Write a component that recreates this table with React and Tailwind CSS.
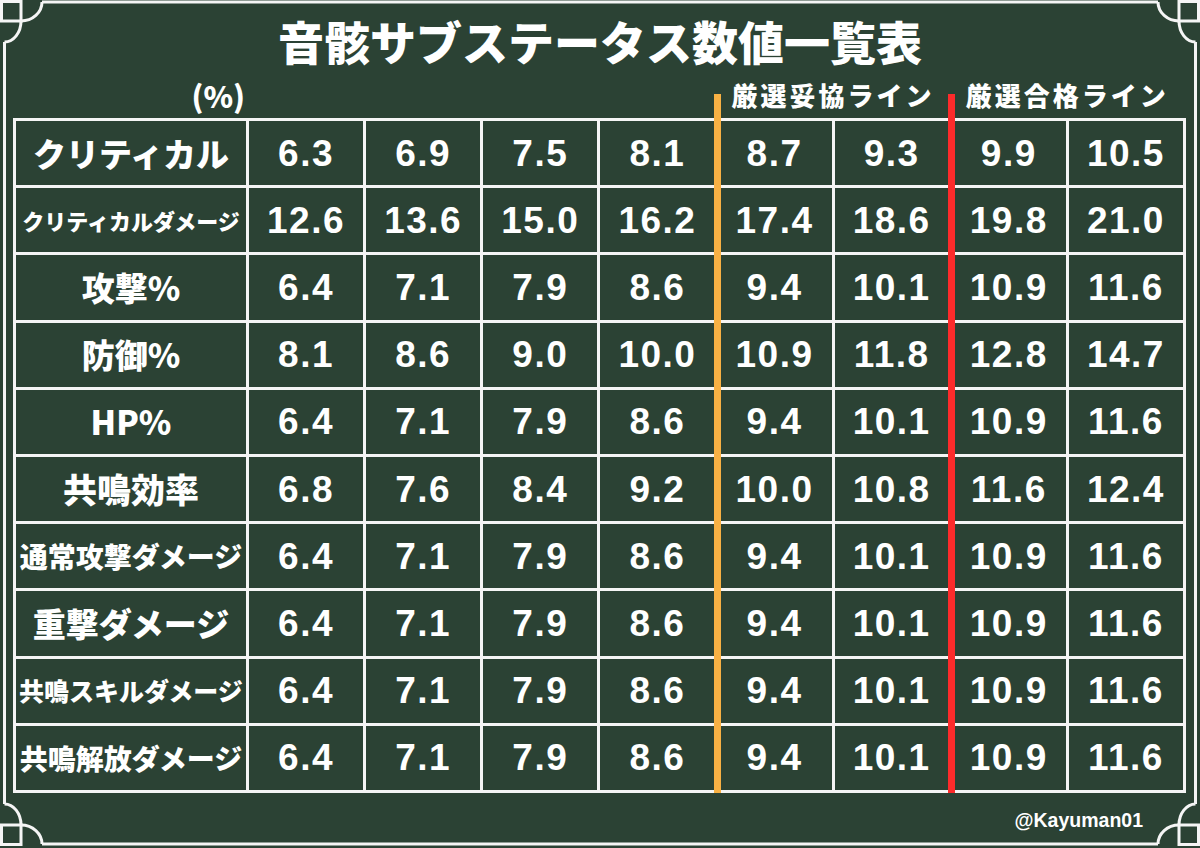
const NUM_STD = ["6.4", "7.1", "7.9", "8.6", "9.4", "10.1", "10.9", "11.6"];

const ROWS = [
  { label: "クリティカル", size: "text-[33px]", values: ["6.3", "6.9", "7.5", "8.1", "8.7", "9.3", "9.9", "10.5"] },
  { label: "クリティカルダメージ", size: "text-[22px]", values: ["12.6", "13.6", "15.0", "16.2", "17.4", "18.6", "19.8", "21.0"] },
  { label: "攻撃%", size: "text-[33px]", values: NUM_STD },
  { label: "防御%", size: "text-[33px]", values: ["8.1", "8.6", "9.0", "10.0", "10.9", "11.8", "12.8", "14.7"] },
  { label: "HP%", size: "text-[33px]", values: NUM_STD },
  { label: "共鳴効率", size: "text-[34px]", values: ["6.8", "7.6", "8.4", "9.2", "10.0", "10.8", "11.6", "12.4"] },
  { label: "通常攻撃ダメージ", size: "text-[28px]", values: NUM_STD },
  { label: "重撃ダメージ", size: "text-[33px]", values: NUM_STD },
  { label: "共鳴スキルダメージ", size: "text-[25px]", values: NUM_STD },
  { label: "共鳴解放ダメージ", size: "text-[28px]", values: NUM_STD },
];

const JP = "font-['Noto_Sans_CJK_JP',sans-serif]";
const NUM = "font-['Liberation_Sans',Arial,sans-serif]";

function Corner({ transform }) {
  return (
    <g transform={transform}>
      <path d="M1.5,1.5 H21 V21 H1.5 Z" />
      <path d="M42,2 A21 19 0 0 1 21,21" />
      <path d="M21,21 A16.5 21 0 0 1 4.5,42" />
    </g>
  );
}

function Frame() {
  return (
    <svg
      className="absolute inset-0 pointer-events-none"
      width="1200"
      height="848"
      viewBox="0 0 1200 848"
      fill="none"
      stroke="#f5f5f5"
      strokeWidth="3"
    >
      <path d="M42,2 H1158" />
      <path d="M42,844 H1158" />
      <path d="M4.5,42 V804" />
      <path d="M1195.5,42 V804" />
      <Corner transform="" />
      <Corner transform="matrix(-1 0 0 1 1200 0)" />
      <Corner transform="matrix(1 0 0 -1 0 846)" />
      <Corner transform="matrix(-1 0 0 -1 1200 846)" />
    </svg>
  );
}

export default function App() {
  return (
    <div className="relative w-[1200px] h-[848px] overflow-hidden bg-[#2b4234] text-white">
      <Frame />

      <div className="flex flex-col">
        <div className="h-[80px] flex items-center justify-center">
          <h1 className={`${JP} font-black text-[46px] leading-none`}>
            音骸サブステータス数値一覧表
          </h1>
        </div>

        <div className="ml-[13px] w-[1173px] h-[30px] px-[3px] grid grid-cols-[230px_repeat(8,1fr)] gap-x-[3px] items-center">
          <div className={`${JP} font-black text-[30px] leading-none text-right pr-[1px]`}>(%)</div>
          <div className="col-span-4" />
          <div className={`${JP} col-span-2 font-black text-[26px] leading-none tracking-[3px] text-center`}>
            厳選妥協ライン
          </div>
          <div className={`${JP} col-span-2 font-black text-[26px] leading-none tracking-[3px] text-center`}>
            厳選合格ライン
          </div>
        </div>

        <div className="mt-[8px] ml-[13px] w-[1173px] h-[675px] bg-[#f5f5f5] p-[3px] grid grid-cols-[230px_repeat(8,1fr)] grid-rows-10 gap-[3px]">
          {ROWS.map((row) => (
            <div key={row.label} className="contents">
              <div
                className={`${JP} ${row.size} bg-[#2b4234] font-black leading-none flex items-center justify-center whitespace-nowrap`}
              >
                {row.label}
              </div>
              {row.values.map((v, i) => (
                <div
                  key={i}
                  className={`${NUM} bg-[#2b4234] font-bold text-[37px] tracking-[1.5px] leading-none flex items-center justify-center`}
                >
                  {v}
                </div>
              ))}
            </div>
          ))}
        </div>

        <div className="h-[55px] flex items-center justify-end pr-[57px]">
          <span className={`${NUM} font-bold text-[19.5px] leading-none`}>@Kayuman01</span>
        </div>
      </div>

      <div className="absolute left-[714px] top-[94px] w-[7px] h-[699px] bg-[#f8b144]" />
      <div className="absolute left-[948px] top-[94px] w-[7px] h-[699px] bg-[#fd2b2b]" />
    </div>
  );
}
